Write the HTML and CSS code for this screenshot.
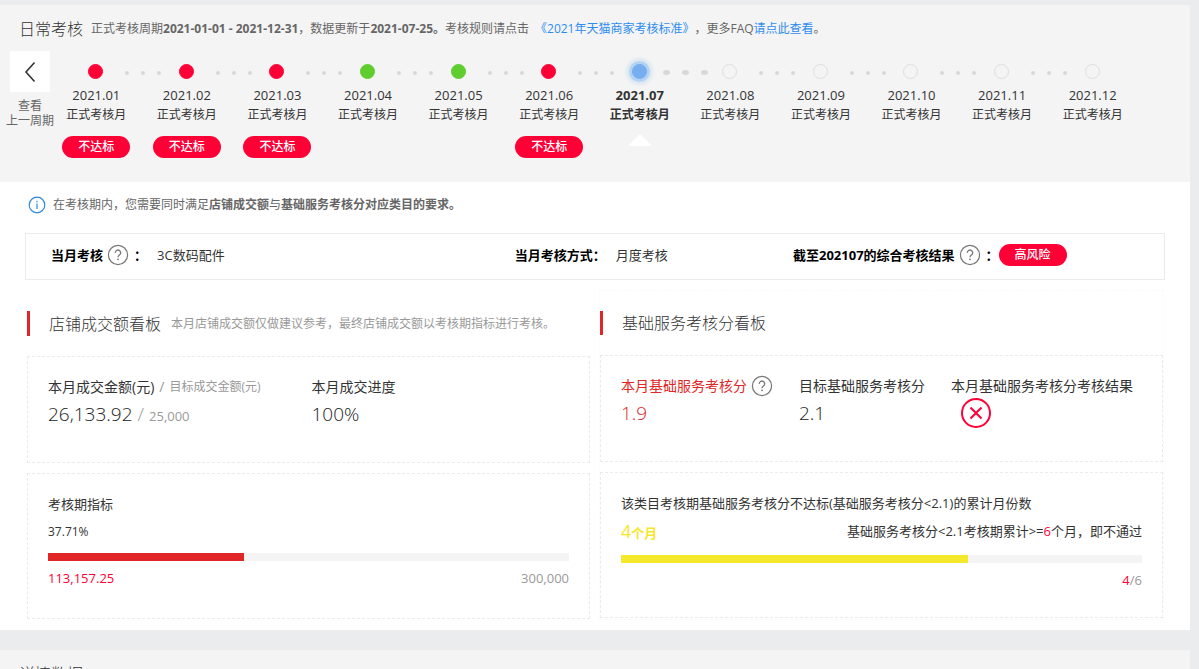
FILE: index.html
```html
<!DOCTYPE html>
<html lang="zh-CN">
<head>
    <meta charset="UTF-8">
    <meta name="viewport" content="width=device-width, initial-scale=1.0">
    <title>日常考核</title>
    <link rel="stylesheet" href="styles.css">
</head>
<body>

<svg class="sprite" aria-hidden="true">
    <symbol id="icon-help" viewBox="0 0 22 22">
        <circle cx="11" cy="11" r="9.6" fill="none" stroke="currentColor" stroke-width="1.2"/>
        <path d="M8.3 8.9a2.7 2.7 0 1 1 4.2 2.1c-1 .7-1.5 1.1-1.5 2.3" fill="none" stroke="currentColor" stroke-width="1.3"/>
        <circle cx="11" cy="15.3" r=".9" fill="currentColor"/>
    </symbol>
</svg>

<main class="panel">
    <header class="head">
        <div class="head-title">
            <h1>日常考核</h1>
            <p>正式考核周期<b>2021-01-01 - 2021-12-31</b>，数据更新于<b>2021-07-25。</b>考核规则请点击<a class="rules" href="#">《2021年天猫商家考核标准》</a>，更多FAQ<a href="#">请点此查看</a>。</p>
        </div>

        <div class="period">
            <div class="prev">
                <button class="prev-button" id="prev" aria-labelledby="prev-label">
                    <svg width="12" height="22" viewBox="0 0 12 22"><path d="M10.500 1.500L2 11l8.500 9.500" fill="none" stroke="#333" stroke-width="1.600"/></svg>
                </button>
                <label id="prev-label" for="prev">查看<br>上一周期</label>
            </div>

            <ol class="months">
                <li class="month">
                    <div class="mark"><i class="node fail"></i><span class="dots"><i></i><i></i><i></i></span></div>
                    <span class="date">2021.01</span><span class="kind">正式考核月</span><span class="pill">不达标</span>
                </li>
                <li class="month">
                    <div class="mark"><i class="node fail"></i><span class="dots"><i></i><i></i><i></i></span></div>
                    <span class="date">2021.02</span><span class="kind">正式考核月</span><span class="pill">不达标</span>
                </li>
                <li class="month">
                    <div class="mark"><i class="node fail"></i><span class="dots"><i></i><i></i><i></i></span></div>
                    <span class="date">2021.03</span><span class="kind">正式考核月</span><span class="pill">不达标</span>
                </li>
                <li class="month">
                    <div class="mark"><i class="node pass"></i><span class="dots"><i></i><i></i><i></i></span></div>
                    <span class="date">2021.04</span><span class="kind">正式考核月</span>
                </li>
                <li class="month">
                    <div class="mark"><i class="node pass"></i><span class="dots"><i></i><i></i><i></i></span></div>
                    <span class="date">2021.05</span><span class="kind">正式考核月</span>
                </li>
                <li class="month">
                    <div class="mark"><i class="node fail"></i><span class="dots"><i></i><i></i><i></i></span></div>
                    <span class="date">2021.06</span><span class="kind">正式考核月</span><span class="pill">不达标</span>
                </li>
                <li class="month active">
                    <div class="mark"><i class="node"></i><span class="dots"><i></i><i></i><i></i></span></div>
                    <span class="date">2021.07</span><span class="kind">正式考核月</span><span class="arrow"></span>
                </li>
                <li class="month">
                    <div class="mark"><i class="node"></i><span class="dots"><i></i><i></i><i></i></span></div>
                    <span class="date">2021.08</span><span class="kind">正式考核月</span>
                </li>
                <li class="month">
                    <div class="mark"><i class="node"></i><span class="dots"><i></i><i></i><i></i></span></div>
                    <span class="date">2021.09</span><span class="kind">正式考核月</span>
                </li>
                <li class="month">
                    <div class="mark"><i class="node"></i><span class="dots"><i></i><i></i><i></i></span></div>
                    <span class="date">2021.10</span><span class="kind">正式考核月</span>
                </li>
                <li class="month">
                    <div class="mark"><i class="node"></i><span class="dots"><i></i><i></i><i></i></span></div>
                    <span class="date">2021.11</span><span class="kind">正式考核月</span>
                </li>
                <li class="month">
                    <div class="mark"><i class="node"></i></div>
                    <span class="date">2021.12</span><span class="kind">正式考核月</span>
                </li>
            </ol>
        </div>
    </header>

    <div class="notice">
        <svg width="18" height="18" viewBox="0 0 18 18">
            <circle cx="9" cy="9" r="7.800" fill="none" stroke="#3089dc" stroke-width="1.200"/>
            <path d="M9 7.500V13M9 4.800V6.200" stroke="#3089dc" stroke-width="1.200"/>
        </svg>
        <p>在考核期内，您需要同时满足<b>店铺成交额</b>与<b>基础服务考核分对应类目的要求。</b></p>
    </div>

    <div class="summary">
        <div class="summary-item">
            <b>当月考核</b><svg class="help"><use href="#icon-help"/></svg><b class="colon">：</b><span>3C数码配件</span>
        </div>
        <div class="summary-item">
            <b>当月考核方式：</b><span>月度考核</span>
        </div>
        <div class="summary-item">
            <b>截至202107的综合考核结果</b><svg class="help"><use href="#icon-help"/></svg><b class="colon">：</b><span class="pill">高风险</span>
        </div>
    </div>

    <div class="boards">
        <section class="board">
            <div class="board-title">
                <h2>店铺成交额看板</h2>
                <p>本月店铺成交额仅做建议参考，最终店铺成交额以考核期指标进行考核。</p>
            </div>
            <div class="card sales">
                <div>
                    <div class="label">本月成交金额(元)<em>/</em><small>目标成交金额(元)</small></div>
                    <div class="value">26,133.92<em>/</em><small>25,000</small></div>
                </div>
                <div>
                    <div class="label">本月成交进度</div>
                    <div class="value">100%</div>
                </div>
            </div>
            <div class="card target">
                <div class="line">考核期指标</div>
                <div class="line percent">37.71%</div>
                <div class="bar"><div class="fill" style="width: 37.71%"></div></div>
                <div class="ends"><span class="hot">113,157.25</span><span>300,000</span></div>
            </div>
        </section>

        <section class="board outlined">
            <div class="board-title">
                <h2>基础服务考核分看板</h2>
            </div>
            <div class="card score">
                <div class="red">
                    <div class="label">本月基础服务考核分<svg class="help"><use href="#icon-help"/></svg></div>
                    <div class="value">1.9</div>
                </div>
                <div>
                    <div class="label">目标基础服务考核分</div>
                    <div class="value">2.1</div>
                </div>
                <div>
                    <div class="label">本月基础服务考核分考核结果</div>
                    <div class="value">
                        <svg class="failed" width="30" height="30" viewBox="0 0 30 30" role="img" aria-label="不通过">
                            <circle cx="15" cy="15" r="14" fill="none" stroke="#ff0036" stroke-width="2"/>
                            <path d="M9.500 9.500l11 11M20.500 9.500l-11 11" stroke="#ff0036" stroke-width="2"/>
                        </svg>
                    </div>
                </div>
            </div>
            <div class="card target">
                <div class="line">该类目考核期基础服务考核分不达标(基础服务考核分&lt;2.1)的累计月份数</div>
                <div class="line split">
                    <b class="months-count"><big>4</big>个月</b>
                    <span>基础服务考核分&lt;2.1考核期累计&gt;=<span class="hot">6</span>个月，即不通过</span>
                </div>
                <div class="bar"><div class="fill yellow" style="width: 66.67%"></div></div>
                <div class="ends right"><span class="hot">4</span><span>/6</span></div>
            </div>
        </section>
    </div>
</main>

<section class="panel detail">
    <h2>详情数据</h2>
</section>

</body>
</html>
```
FILE: styles.css
```css
* {
    box-sizing: border-box;
}
body {
    margin: 0;
    padding: 5px 9px 0 0;
    background-color: #ebecee;
    font-family: "Open Sans", "Noto Sans CJK SC", sans-serif;
    font-size: 12px;
    line-height: 20px;
    color: #333;
}
h1, h2, p, ol {
    margin: 0;
    padding: 0;
}
h1, h2 {
    font-size: 16px;
    line-height: 24px;
    font-weight: 300;
}
a {
    color: #2e8cf0;
    text-decoration: none;
}
.sprite {
    display: block;
    width: 0;
    height: 0;
}
.panel {
    background-color: #fff;
}

/* header and timeline */
.head {
    height: 177px;
    padding-top: 12px;
    background-color: #f4f4f4;
}
.head-title {
    display: flex;
    align-items: center;
    gap: 8px;
    padding-left: 19px;
    color: #666;
}
.head-title h1 {
    color: #333;
}
.rules {
    margin: 0 6px;
}
.period {
    display: flex;
    padding: 10px 52px 0 0;
}
.prev {
    width: 60px;
    line-height: 15px;
    text-align: center;
    color: #666;
}
.prev-button {
    display: flex;
    align-items: center;
    justify-content: center;
    width: 40px;
    height: 41px;
    margin: 0 10px 6px;
    padding: 0;
    border: none;
    background-color: #fff;
    cursor: pointer;
}
.months {
    display: flex;
    flex: 1;
    margin-left: -9px;
    list-style: none;
}
.month {
    display: flex;
    flex: 1;
    flex-direction: column;
    align-items: center;
    width: 0;
    padding-top: 13px;
}
.mark {
    display: flex;
    align-items: center;
    align-self: stretch;
    height: 15px;
    margin-bottom: 6px;
    padding-left: calc(50% - 8px);
}
.node {
    flex: none;
    width: 15px;
    height: 15px;
    border: 1px solid #dedede;
    border-radius: 50%;
}
.node.fail {
    border-color: #ff0036;
    background-color: #ff0036;
}
.node.pass {
    border-color: #5fcd2e;
    background-color: #5fcd2e;
}
.active .node {
    border-color: #76aef0;
    background-color: #76aef0;
    box-shadow: 0 0 0 3px #b4d3f3, 0 0 3px 6px #dde8f2;
}
.dots {
    display: flex;
    gap: 12px;
    margin: 2px 0 0 22px;
}
.dots i {
    flex: none;
    width: 4px;
    height: 4px;
    border-radius: 50%;
    background-color: #d8d8d8;
}
.active .dots {
    margin-left: 16px;
}
.active .dots i {
    width: 7px;
    height: 5px;
}
.date {
    font-size: 13px;
    line-height: 20px;
}
.kind {
    line-height: 20px;
}
.active .date,
.active .kind {
    font-weight: 700;
}
.pill {
    width: 68px;
    height: 22px;
    border-radius: 11px;
    background-color: #ff0036;
    font-size: 12px;
    line-height: 22px;
    font-weight: 500;
    text-align: center;
    color: #fff;
}
.month .pill {
    margin-top: 11px;
}
.arrow {
    margin-top: 9px;
    border: 12px solid transparent;
    border-top-width: 0;
    border-bottom-color: #fff;
}

/* notice and summary */
.notice {
    display: flex;
    align-items: center;
    gap: 7px;
    padding: 13px 28px 18px;
    color: #666;
}
.summary {
    display: grid;
    grid-template-columns: 5fr 3fr 4fr;
    margin: 0 25px 10px;
    padding: 0 0 0 25px;
    border: 1px solid #ebebeb;
    font-size: 13px;
}
.summary-item {
    display: flex;
    align-items: center;
    height: 45px;
    padding-bottom: 4px;
    white-space: nowrap;
}
.summary-item b {
    color: #000;
}
.summary-item span {
    margin-left: 10px;
}
.summary-item .colon {
    margin-left: 5px;
}
.summary-item .pill {
    margin-left: 0;
}
.help {
    width: 22px;
    height: 22px;
    margin-left: 4px;
    color: #777;
}

/* boards */
.boards {
    display: grid;
    grid-template-columns: 1fr 1fr;
    gap: 8px;
    padding: 0 26px 10px;
}
.board {
    padding-top: 20px;
    border: 1px solid transparent;
}
.board.outlined {
    border: 1px dashed #fafafa;
}
.board-title {
    display: flex;
    align-items: center;
    gap: 10px;
    height: 25px;
    margin-bottom: 20px;
    padding-left: 19px;
    border-left: 3px solid #e02626;
    white-space: nowrap;
}
.outlined .board-title {
    height: 24px;
}
.board-title p {
    color: #999;
}
.card {
    padding: 20px;
    border: 1px dashed #ebebeb;
}
.card + .card {
    margin-top: 10px;
}
.sales,
.score {
    display: grid;
    height: 107px;
    white-space: nowrap;
}
.sales {
    grid-template-columns: 1fr 1fr;
    gap: 6px;
}
.score {
    grid-template-columns: auto auto auto;
    justify-content: start;
    gap: 26px;
}
.label {
    display: flex;
    align-items: center;
    height: 20px;
    font-size: 14px;
}
.label small {
    font-size: 12px;
    color: #999;
}
.value {
    height: 30px;
    margin-top: 2px;
    font-size: 19px;
    line-height: 30px;
    font-weight: 300;
    color: #222;
}
.label em,
.value em {
    margin: 0 5px;
    font-style: normal;
    color: #999;
}
.value small {
    font-size: 13px;
    font-weight: 400;
    color: #999;
}
.red .label,
.red .value {
    color: #e02626;
}
.failed {
    display: block;
    margin-left: 10px;
}
.target {
    height: 146px;
    font-size: 13px;
}
.line {
    height: 20px;
    margin-bottom: 8px;
}
.percent {
    font-size: 12px;
}
.split {
    display: flex;
    justify-content: space-between;
}
.months-count {
    color: #f5e72a;
}
.months-count big {
    font-size: 18px;
    font-weight: 400;
}
.bar {
    height: 8px;
    margin-top: 11px;
    background-color: #f4f4f4;
}
.split + .bar {
    margin-top: 14px;
}
.fill {
    height: 8px;
    background-color: #e02626;
}
.fill.yellow {
    background-color: #f5e72a;
}
.ends {
    display: flex;
    justify-content: space-between;
    margin-top: 7px;
    color: #999;
}
.ends.right {
    justify-content: flex-end;
}
.hot {
    color: #ff0036;
}

.detail {
    margin-top: 20px;
    padding: 12px 19px;
    background-color: #f4f4f4;
}
```
